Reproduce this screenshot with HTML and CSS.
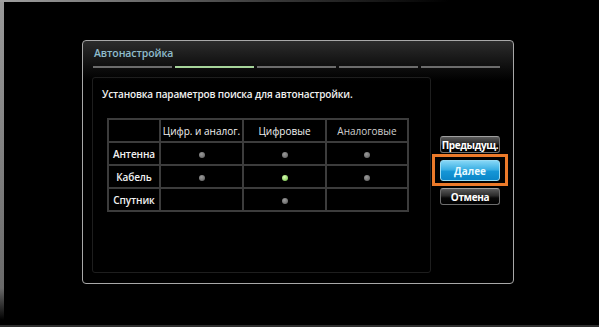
FILE: index.html
```html
<!DOCTYPE html>
<html lang="ru">
    <head>
        <meta charset="utf-8">
        <title>Автонастройка</title>
        <link rel="stylesheet" href="styles.css">
    </head>

    <body>
        <div id="screen">
            <div id="dialog">
                <h1 id="dialog-title">Автонастройка</h1>

                <div class="steps">
                    <div class="step"></div>
                    <div class="step active"></div>
                    <div class="step"></div>
                    <div class="step"></div>
                    <div class="step"></div>
                </div>

                <div class="dialog-body">
                    <div class="panel">
                        <p class="hint">Установка параметров поиска для автонастройки.</p>

                        <table class="options">
                            <tr>
                                <th></th>
                                <th class="col-head">Цифр. и аналог.</th>
                                <th class="col-head">Цифровые</th>
                                <th class="col-head dim">Аналоговые</th>
                            </tr>
                            <tr>
                                <th class="row-head">Антенна</th>
                                <td><span class="dot"></span></td>
                                <td><span class="dot"></span></td>
                                <td><span class="dot"></span></td>
                            </tr>
                            <tr>
                                <th class="row-head">Кабель</th>
                                <td><span class="dot"></span></td>
                                <td><span class="dot selected"></span></td>
                                <td><span class="dot"></span></td>
                            </tr>
                            <tr>
                                <th class="row-head">Спутник</th>
                                <td></td>
                                <td><span class="dot"></span></td>
                                <td></td>
                            </tr>
                        </table>
                    </div>

                    <div class="buttons">
                        <button class="tv-button">Предыдущ.</button>
                        <button class="tv-button primary focused">Далее</button>
                        <button class="tv-button">Отмена</button>
                    </div>
                </div>
            </div>
        </div>
    </body>
</html>
```

FILE: styles.css
```css
html, body {
    margin: 0;
    width: 100%;
    height: 100%;
    background: #000;
}

#screen {
    box-sizing: border-box;
    width: 599px;
    height: 327px;
    padding: 40px 0 0 82px;
    font-family: "Open Sans", sans-serif;

    /* bezel edges of the TV */
    background:
        linear-gradient(to right, #a0a0a0, #3a3a3a 45%, #000 75%) top left / 100% 2px no-repeat,
        linear-gradient(#9a9a9a, #6a6a6a 90%, #000) top left / 4px 320px no-repeat,
        linear-gradient(#2e2e2e, #2e2e2e) bottom left / 100% 2px no-repeat,
        #000;
}

#dialog {
    box-sizing: border-box;
    width: 432px;
    height: 244px;
    padding: 5px 13px 9px 9px;
    border: 1px solid #a8a8a8;
    border-radius: 4px;
    background: linear-gradient(#2c2c2c, #0c0c0c 28px, #000 40px);
}

#dialog-title {
    margin: 0 0 6px 2px;
    font-size: 10.5px;
    line-height: 14px;
    font-weight: 600;
    letter-spacing: -0.1px;
    color: #8fbccc;
}

.steps {
    display: flex;
    gap: 3px;
    margin: 0 0 9px 1px;
}

.step {
    flex: 1;
    height: 2px;
    background: #6c6c6c;
}

.step.active {
    background: #a6d49a;
}

.dialog-body {
    display: flex;
    gap: 9px;
}

.panel {
    box-sizing: border-box;
    width: 340px;
    height: 196px;
    padding: 9px 0 0 9px;
    border: 1px solid #1e1e1e;
    border-radius: 3px;
}

.hint {
    margin: 0 0 17px;
    font-size: 10px;
    line-height: 14px;
    font-weight: 600;
    letter-spacing: -0.15px;
    color: #f0f0f0;
}

.options {
    margin-left: 5px;
    border-collapse: collapse;
    color: #f2f2f2;
    font-size: 10px;
}

.options th,
.options td {
    height: 21px;
    padding: 0;
    border: 2px solid #3c3c3c;
    text-align: center;
    white-space: nowrap;
}

.options tr > :nth-child(1) { width: 50px; }
.options tr > :nth-child(2) { width: 81px; max-width: 81px; overflow: hidden; }
.options tr > :nth-child(3) { width: 81px; }
.options tr > :nth-child(4) { width: 80px; }

.col-head {
    font-weight: 400;
}

.col-head.dim {
    color: #d0d0d0;
}

.row-head {
    font-weight: 600;
    letter-spacing: -0.1px;
}

.dot {
    display: inline-block;
    width: 6px;
    height: 6px;
    border-radius: 50%;
    vertical-align: middle;
    background: radial-gradient(circle at 40% 35%, #9a9a9a, #5a5a5a);
}

.dot.selected {
    background: radial-gradient(circle at 40% 35%, #d8ffb0, #6cb844);
}

.buttons {
    display: flex;
    flex-direction: column;
    padding-top: 59px;
}

.tv-button {
    position: relative;
    box-sizing: border-box;
    width: 60px;
    height: 17px;
    margin-bottom: 6px;
    padding: 0;
    border: 1px solid #6e6e6e;
    border-top-color: #a0a0a0;
    border-radius: 3px;
    background: linear-gradient(#5a5a5a, #2a2a2a 45%, #080808 60%, #000);
    color: #fff;
    font-family: "Open Sans", sans-serif;
    font-size: 10px;
    font-weight: 700;
    letter-spacing: -0.35px;
    line-height: 14px;
}

.tv-button.primary {
    height: 21px;
    margin: 1px 0 7px;
    border-color: #9adcf4;
    background: linear-gradient(#84d6f6, #3cb0e4 45%, #1596d6 55%, #0a86c8);
    color: #e8faff;
    letter-spacing: 0;
}

/* square orange focus frame around the selected button */
.tv-button.focused::after {
    content: "";
    position: absolute;
    left: -9px;
    right: -9px;
    top: -7px;
    bottom: -6px;
    border: 3px solid #ec7a2a;
}
```
